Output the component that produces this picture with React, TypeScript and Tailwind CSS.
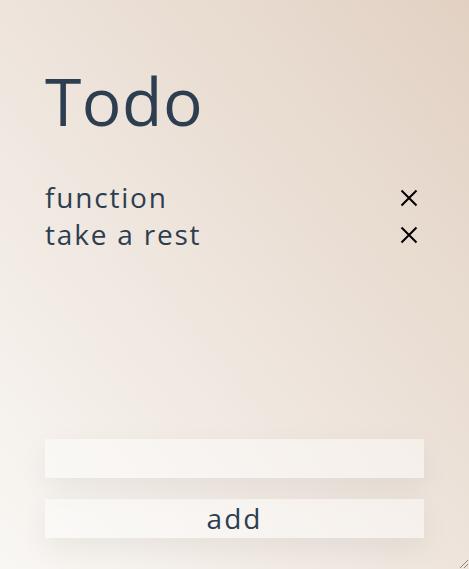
import { useState } from "react";

function Cross() {
  return (
    <svg width="18" height="18" viewBox="0 0 18 18" className="block">
      <path d="M1.5 1.5 L16.5 16.5 M16.5 1.5 L1.5 16.5" stroke="#000" strokeWidth="2" fill="none" />
    </svg>
  );
}

export default function App() {
  const [todos, setTodos] = useState<string[]>(["function", "take a rest"]);
  const [text, setText] = useState("");

  const add = () => {
    if (!text.trim()) return;
    setTodos([...todos, text.trim()]);
    setText("");
  };

  return (
    <div
      className="relative flex h-[569px] w-full flex-col bg-gradient-to-tr from-[#f9f7f4] to-[#e2d1c3] px-[45px] pb-[31px] pt-[64px] text-[#2c3e50]"
      style={{ fontFamily: '"Open Sans", sans-serif' }}
    >
      <h1 className="text-[66px] font-normal leading-[72px] tracking-[0.5px]">Todo</h1>

      <ul className="mt-[43px] flex flex-col">
        {todos.map((t, i) => (
          <li key={i} className="flex h-[37px] items-center justify-between text-[28px] leading-[37px]">
            <span className="tracking-[1.8px]">{t}</span>
            <button
              className="mr-[6px] flex h-[37px] items-center"
              onClick={() => setTodos(todos.filter((_, j) => j !== i))}
            >
              <Cross />
            </button>
          </li>
        ))}
      </ul>

      <div className="mt-auto flex flex-col gap-[21px]">
        <input
          value={text}
          onChange={(e) => setText(e.target.value)}
          className="h-[39px] w-full bg-white/45 px-3 text-[26px] shadow-[0_10px_30px_rgba(0,0,0,0.06)] outline-none"
        />
        <button
          onClick={add}
          className="h-[39px] w-full bg-white/45 text-[28px] leading-[39px] tracking-[2px] shadow-[0_10px_30px_rgba(0,0,0,0.06)]"
        >
          add
        </button>
      </div>

      <svg width="12" height="12" viewBox="0 0 12 12" className="absolute bottom-0 right-0">
        <path d="M11 3 L3 11 M11 7 L7 11" stroke="#888" strokeWidth="1" />
      </svg>
    </div>
  );
}
